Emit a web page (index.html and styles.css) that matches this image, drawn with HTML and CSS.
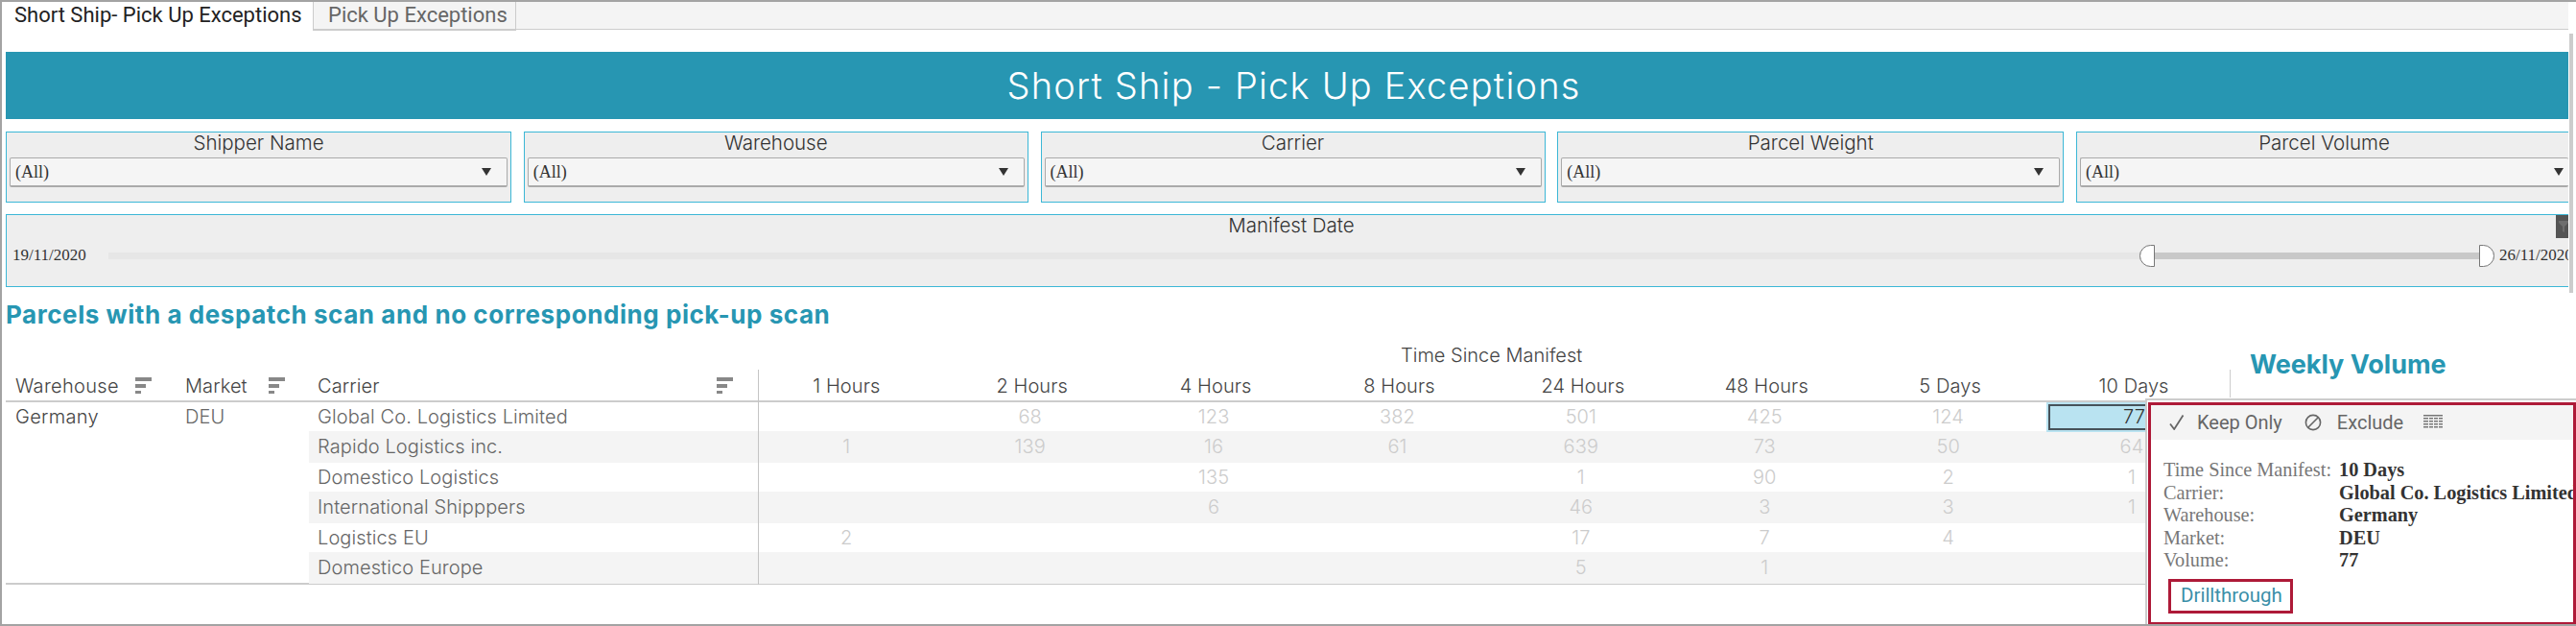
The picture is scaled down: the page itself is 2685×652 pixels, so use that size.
FILE: index.html
```html
<!DOCTYPE html>
<html lang="en">
<head>
<meta charset="utf-8">
<title>Short Ship - Pick Up Exceptions</title>
<link rel="stylesheet" href="styles.css">
</head>
<body>
<div class="app">
  <div class="tabs">
    <div class="tab active">Short Ship- Pick Up Exceptions</div>
    <div class="tab">Pick Up Exceptions</div>
  </div>
  <div class="content">
    <h1 class="banner">Short Ship - Pick Up Exceptions</h1>
    <div class="filters">
      <div class="filter w527"><div class="f-title">Shipper Name</div><div class="select"><span>(All)</span><i class="caret"></i></div></div>
      <div class="filter w526"><div class="f-title">Warehouse</div><div class="select"><span>(All)</span><i class="caret"></i></div></div>
      <div class="filter w526"><div class="f-title">Carrier</div><div class="select"><span>(All)</span><i class="caret"></i></div></div>
      <div class="filter w528"><div class="f-title">Parcel Weight</div><div class="select"><span>(All)</span><i class="caret"></i></div></div>
      <div class="filter w513"><div class="f-title">Parcel Volume</div><div class="select"><span>(All)</span><i class="caret"></i></div></div>
    </div>
    <div class="date-filter">
      <div class="f-title date-title">Manifest Date</div>
      <div class="slider-row">
        <span class="date">19/11/2020</span>
        <div class="track">
          <div class="track-active">
            <i class="handle left"></i>
            <i class="handle right"></i>
          </div>
        </div>
        <span class="date end">26/11/2020</span>
      </div>
      <div class="filter-btn">
        <svg width="13" height="24" viewBox="0 0 13 24"><path d="M3 6h10v2l-4 4v6l-2-1v-5L3 8z" fill="#6e6e6e"/></svg>
      </div>
    </div>
    <h2 class="heading">Parcels with a despatch scan and no corresponding pick-up scan</h2>

    <div class="table">
      <div class="head-top">
        <div class="group-title">Time Since Manifest</div>
        <div class="weekly">Weekly Volume</div>
        <div class="weekly-rule"></div>
      </div>
      <div class="row head">
        <div class="c-w">Warehouse<svg class="sort" viewBox="0 0 17 17"><path d="M0 0h17v4H0zM0 7h11v4H0zM0 14h6v3H0z"/></svg></div>
        <div class="c-m">Market<svg class="sort" viewBox="0 0 17 17"><path d="M0 0h17v4H0zM0 7h11v4H0zM0 14h6v3H0z"/></svg></div>
        <div class="c-c">Carrier<svg class="sort" viewBox="0 0 17 17"><path d="M0 0h17v4H0zM0 7h11v4H0zM0 14h6v3H0z"/></svg></div>
        <div class="n">1 Hours</div><div class="n">2 Hours</div><div class="n">4 Hours</div><div class="n">8 Hours</div><div class="n">24 Hours</div><div class="n">48 Hours</div><div class="n">5 Days</div><div class="n">10 Days</div>
      </div>
      <div class="body">
        <div class="row first">
          <div class="c-w dark">Germany</div><div class="c-m">DEU</div><div class="c-c">Global Co. Logistics Limited</div>
          <div class="n"></div><div class="n">68</div><div class="n">123</div><div class="n">382</div><div class="n">501</div><div class="n">425</div><div class="n">124</div><div class="n sel-cell"><span class="selected">77</span></div>
        </div>
        <div class="row alt">
          <div class="c-w"></div><div class="c-m"></div><div class="c-c">Rapido Logistics inc.</div>
          <div class="n">1</div><div class="n">139</div><div class="n">16</div><div class="n">61</div><div class="n">639</div><div class="n">73</div><div class="n">50</div><div class="n">64</div>
        </div>
        <div class="row">
          <div class="c-w"></div><div class="c-m"></div><div class="c-c">Domestico Logistics</div>
          <div class="n"></div><div class="n"></div><div class="n">135</div><div class="n"></div><div class="n">1</div><div class="n">90</div><div class="n">2</div><div class="n">1</div>
        </div>
        <div class="row alt">
          <div class="c-w"></div><div class="c-m"></div><div class="c-c">International Shipppers</div>
          <div class="n"></div><div class="n"></div><div class="n">6</div><div class="n"></div><div class="n">46</div><div class="n">3</div><div class="n">3</div><div class="n">1</div>
        </div>
        <div class="row">
          <div class="c-w"></div><div class="c-m"></div><div class="c-c">Logistics EU</div>
          <div class="n">2</div><div class="n"></div><div class="n"></div><div class="n"></div><div class="n">17</div><div class="n">7</div><div class="n">4</div><div class="n"></div>
        </div>
        <div class="row alt">
          <div class="c-w"></div><div class="c-m"></div><div class="c-c">Domestico Europe</div>
          <div class="n"></div><div class="n"></div><div class="n"></div><div class="n"></div><div class="n">5</div><div class="n">1</div><div class="n"></div><div class="n"></div>
        </div>
      </div>
    </div>
  </div>
  <div class="scroll-line"></div>

  <div class="tooltip">
    <div class="tip-inner">
      <div class="tip-bar">
        <svg class="ico-check" viewBox="0 0 16 16"><path d="M1 9.5l4.2 5.5L14.5 0.5" fill="none" stroke="#666" stroke-width="1.8"/></svg>
        <span class="keep">Keep Only</span>
        <svg class="ico-ban" viewBox="0 0 18 18"><circle cx="9" cy="9" r="7.6" fill="none" stroke="#666" stroke-width="1.6"/><path d="M4 14L14 4" stroke="#666" stroke-width="1.6"/></svg>
        <span class="excl">Exclude</span>
        <svg class="ico-table" viewBox="0 0 20 14"><path fill="#777" d="M0 0h20v1.6H0zM0 3h5v1.6H0zM6 3h4v1.6H6zM11 3h4v1.6h-4zM16 3h4v1.6h-4zM0 6h5v1.6H0zM6 6h4v1.6H6zM11 6h4v1.6h-4zM16 6h4v1.6h-4zM0 9h5v1.6H0zM6 9h4v1.6H6zM11 9h4v1.6h-4zM16 9h4v1.6h-4zM0 12h5v1.6H0zM6 12h4v1.6H6zM11 12h4v1.6h-4zM16 12h4v1.6h-4z"/></svg>
      </div>
      <div class="tip-body">
        <div class="k">Time Since Manifest:</div><div class="v">10 Days</div>
        <div class="k">Carrier:</div><div class="v">Global Co. Logistics Limited</div>
        <div class="k">Warehouse:</div><div class="v">Germany</div>
        <div class="k">Market:</div><div class="v">DEU</div>
        <div class="k">Volume:</div><div class="v">77</div>
      </div>
      <div class="drill">Drillthrough</div>
    </div>
  </div>
</div>
</body>
</html>
```
FILE: styles.css
```css
* { box-sizing: border-box; }
html, body { margin: 0; padding: 0; background: #fff; }
.app {
  position: relative;
  width: 2685px;
  height: 652px;
  overflow: hidden;
  border-top: 2px solid #a3a3a3;
  border-bottom: 2px solid #a3a3a3;
  border-left: 2px solid #a3a3a3;
  font-family: Inter, "Open Sans", sans-serif;
  color: #444;
}
.tabs {
  display: flex;
  height: 29px;
  width: 2675px;
  background: #f4f4f4;
  border-bottom: 1px solid #ccc;
  font-family: Roboto, sans-serif;
  font-size: 22px;
  white-space: nowrap;
}
.tab {
  height: 30px;
  padding: 0 12px 0 15px;
  line-height: 27px;
  color: #666;
  border-right: 1px solid #ccc;
  border-bottom: 1px solid #ccc;
}
.tab.active {
  width: 325px;
  padding: 0 0 0 13px;
  color: #222;
  background: #fff;
  border-bottom: 0;
}
.tab:not(.active) { width: 211px; }
.content { padding: 23px 0 0 4px; width: 2675px; }
.banner {
  margin: 0;
  height: 70px;
  padding-left: 14px;
  background: #2796b2;
  color: #fff;
  font-weight: 300;
  font-size: 38px;
  letter-spacing: 1.2px;
  line-height: 70px;
  text-align: center;
}
.filters {
  display: flex;
  justify-content: space-between;
  margin-top: 13px;
}
.filter {
  height: 74px;
  background: #eee;
  border: 1px solid #3cb7d6;
  padding: 0 3px;
}
.w527 { width: 527px; }
.w526 { width: 526px; }
.w528 { width: 528px; }
.w513 { width: 513px; border-right: 0; padding-right: 0; }
.w513 .select { border-right: 0; padding-right: 5px; }
.f-title {
  height: 26px;
  line-height: 21px;
  font-size: 20.5px;
  font-weight: 300;
  color: #333;
  text-align: center;
}
.select {
  display: flex;
  align-items: center;
  justify-content: space-between;
  height: 31px;
  padding: 0 16px 0 5px;
  background: #f5f5f5;
  border: 1px solid #aaa;
  border-bottom-width: 2px;
  border-radius: 2px;
  font-family: "Liberation Serif", serif;
  font-size: 18px;
  line-height: 30px;
  color: #333;
}
.caret {
  width: 0; height: 0;
  border-left: 5px solid transparent;
  border-right: 5px solid transparent;
  border-top: 8px solid #333;
}
.date-filter {
  position: relative;
  height: 76px;
  margin-top: 12px;
  background: #eee;
  border: 1px solid #3cb7d6;
  border-right: 0;
  overflow: hidden;
}
.date-title { height: 29px; line-height: 22px; padding-left: 8px; }
.slider-row {
  display: flex;
  align-items: center;
  height: 26px;
  padding-left: 6px;
  font-family: "Liberation Serif", serif;
  font-size: 17px;
  color: #333;
}
.date { width: 100px; flex: none; white-space: nowrap; }
.date.end { width: 78px; margin-left: 5px; }
.track {
  flex: 0 0 2487px;
  height: 7px;
  background: #e6e6e6;
  display: flex;
  justify-content: flex-end;
}
.track-active { position: relative; width: 370px; height: 7px; background: #c8c8c8; }
.handle {
  position: absolute;
  top: -8px;
  width: 16px;
  height: 23px;
  background: #fff;
  border: 1px solid #777;
}
.handle.left { left: 0; border-radius: 12px 0 0 12px; }
.handle.right { right: 0; border-radius: 0 12px 12px 0; }
.filter-btn {
  position: absolute;
  right: 0;
  top: 0;
  width: 13px;
  height: 24px;
  background: #555;
}
.filter-btn svg { display: block; }
.heading {
  margin: 14px 0 1px 0;
  height: 30px;
  font-size: 26px;
  letter-spacing: 0.56px;
  line-height: 30px;
  font-weight: 700;
  color: #2796b2;
}
.table { position: relative; }
.table::after {
  content: "";
  position: absolute;
  left: 784px;
  top: 41px;
  bottom: 0;
  width: 1px;
  background: #c4c4c4;
}
.head-top { position: relative; height: 41px; }
.group-title {
  position: absolute;
  left: 1454px;
  top: 14px;
  font-size: 20px;
  line-height: 24px;
  font-weight: 300;
  color: #444;
  white-space: nowrap;
}
.weekly {
  position: absolute;
  left: 2339px;
  top: 20px;
  font-size: 27px;
  line-height: 32px;
  font-weight: 700;
  color: #2796b2;
  white-space: nowrap;
}
.weekly-rule {
  position: absolute;
  left: 2318px;
  top: 41px;
  width: 1px;
  height: 29px;
  background: #ccc;
}
.row {
  display: grid;
  grid-template-columns: 182px 134px 464.6px repeat(8, 191.4px);
  height: 31.6px;
  line-height: 33px;
  font-size: 20px;
  letter-spacing: 0.1px;
  font-weight: 300;
  color: #666;
}
.row.first { height: 30px; line-height: 30px; }
.head {
  height: 34px;
  border-bottom: 2px solid #ccc;
  line-height: 34px;
  color: #444;
  width: 2671px;
}
.body { border-bottom: 2px solid #ccc; height: 190px; }
.c-w, .c-m, .c-c { position: relative; white-space: nowrap; }
.c-w { padding-left: 10px; letter-spacing: 0.3px; }
.c-w.dark { color: #444; }
.c-m { padding-left: 5px; }
.c-c { padding-left: 9px; }
.alt .c-c, .alt .n { background: #f4f4f4; }
.n { text-align: center; color: #ccc; }
.head .n { color: #444; padding-left: 4px; }
.head .n:nth-child(4) { padding-left: 0; }
.sort {
  position: absolute;
  top: 8px;
  width: 17px;
  height: 17px;
  fill: #888;
}
.c-w .sort { left: 135px; }
.c-m .sort { left: 92px; }
.c-c .sort { left: 425px; }
.sel-cell { position: relative; }
.selected {
  position: absolute;
  left: 9px;
  right: 0;
  top: 2px;
  bottom: 1px;
  background: #b9e3f1;
  border: 2px solid #46525a;
  outline: 2px solid #b9e3f1;
  padding-right: 4px;
  line-height: 23px;
  text-align: center;
  color: #333;
}
.scroll-line {
  position: absolute;
  left: 2676px;
  top: 33px;
  width: 4px;
  height: 270px;
  background: #ccc;
}
.tooltip {
  position: absolute;
  left: 2234px;
  top: 413px;
  width: 449px;
  height: 240px;
  background: #fff;
  border: 2px solid #ccc;
  border-right: 0;
  padding: 2px 0 0 1px;
}
.tip-inner {
  height: 232px;
  border: 3px solid #ae1a38;
  overflow: hidden;
  width: 446px;
}
.tip-bar {
  display: flex;
  align-items: center;
  height: 36px;
  background: #f4f4f4;
  font-family: Roboto, sans-serif;
  font-size: 20px;
  color: #666;
}
.ico-check { width: 16px; height: 16px; margin-left: 19px; }
.keep { margin-left: 13px; }
.ico-ban { width: 18px; height: 18px; margin-left: 23px; }
.excl { margin-left: 16px; }
.ico-table { width: 20px; height: 14px; margin: -3px 0 0 21px; }
.tip-body {
  display: grid;
  grid-template-columns: 183px 1fr;
  padding: 20px 0 0 13px;
  font-family: "Liberation Serif", serif;
  font-size: 20.3px;
  line-height: 23.5px;
  white-space: nowrap;
}
.k { color: #777; }
.v { color: #333; font-weight: 700; }
.drill {
  width: 130px;
  height: 36px;
  margin: 7px 0 0 18px;
  border: 3px solid #ae1a38;
  padding-left: 10px;
  font-family: Roboto, sans-serif;
  font-size: 20.5px;
  line-height: 28px;
  color: #3a8fa8;
}
```
